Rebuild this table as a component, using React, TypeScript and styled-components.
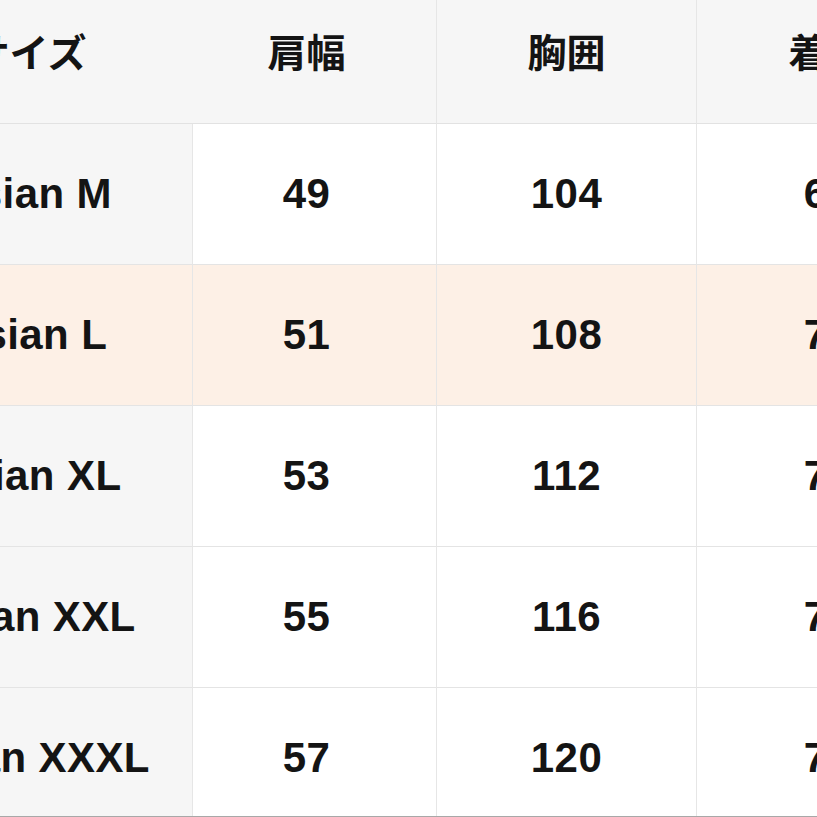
import React from "react";
import styled, { createGlobalStyle } from "styled-components";

const Global = createGlobalStyle`
  html, body { margin: 0; padding: 0; background: #ffffff; }
  body { overflow: hidden; }
`;

const Frame = styled.div`
  width: 817px;
  height: 816px;
  overflow: hidden;
  border-bottom: 1px solid #a8a8a8;
  background: #ffffff;
`;

const Table = styled.div`
  display: grid;
  grid-template-columns: 313px 244px 260px 262px;
  grid-template-rows: 124px repeat(5, 141px);
  margin-left: -120px;
  font-family: "Liberation Sans", "Noto Sans CJK JP", Arial, sans-serif;
  font-weight: 700;
  color: #141414;
`;

const HeadCell = styled.div<{ $divider?: boolean; $pad?: number }>`
  box-sizing: border-box;
  background: #f6f6f6;
  border-bottom: 1px solid #e2e2e2;
  border-right: ${(p) => (p.$divider ? "1px solid #e6e6e6" : "none")};
  display: flex;
  align-items: center;
  justify-content: center;
  padding-bottom: 24px;
  padding-right: ${(p) => p.$pad ?? 0}px;
  font-family: "Noto Sans CJK JP", "Liberation Sans", sans-serif;
  font-size: 39px;
  font-weight: 700;
`;

const Cell = styled.div<{ $kind: "label" | "value"; $hl?: boolean; $pad?: number }>`
  box-sizing: border-box;
  background: ${(p) => (p.$hl ? "#fdf0e6" : p.$kind === "label" ? "#f6f6f6" : "#ffffff")};
  border-bottom: 1px solid #e4e4e4;
  border-right: 1px solid #e6e6e6;
  display: flex;
  align-items: center;
  justify-content: center;
  padding-right: ${(p) => p.$pad ?? 0}px;
  font-size: 42px;
  letter-spacing: 0.4px;
`;

const rows = [
  { size: "Asian M", shoulder: "49", chest: "104", length: "69" },
  { size: "Asian L", shoulder: "51", chest: "108", length: "71" },
  { size: "Asian XL", shoulder: "53", chest: "112", length: "73" },
  { size: "Asian XXL", shoulder: "55", chest: "116", length: "75" },
  { size: "Asian XXXL", shoulder: "57", chest: "120", length: "77" },
];

export default function App() {
  return (
    <>
      <Global />
      <Frame>
        <Table>
          <HeadCell $pad={16}>サイズ</HeadCell>
          <HeadCell $divider $pad={16}>肩幅</HeadCell>
          <HeadCell $divider>胸囲</HeadCell>
          <HeadCell $divider>着丈</HeadCell>
          {rows.map((r, i) => (
            <React.Fragment key={r.size}>
              <Cell $kind="label" $hl={i === 1} $pad={12}>{r.size}</Cell>
              <Cell $kind="value" $hl={i === 1} $pad={16}>{r.shoulder}</Cell>
              <Cell $kind="value" $hl={i === 1}>{r.chest}</Cell>
              <Cell $kind="value" $hl={i === 1}>{r.length}</Cell>
            </React.Fragment>
          ))}
        </Table>
      </Frame>
    </>
  );
}
